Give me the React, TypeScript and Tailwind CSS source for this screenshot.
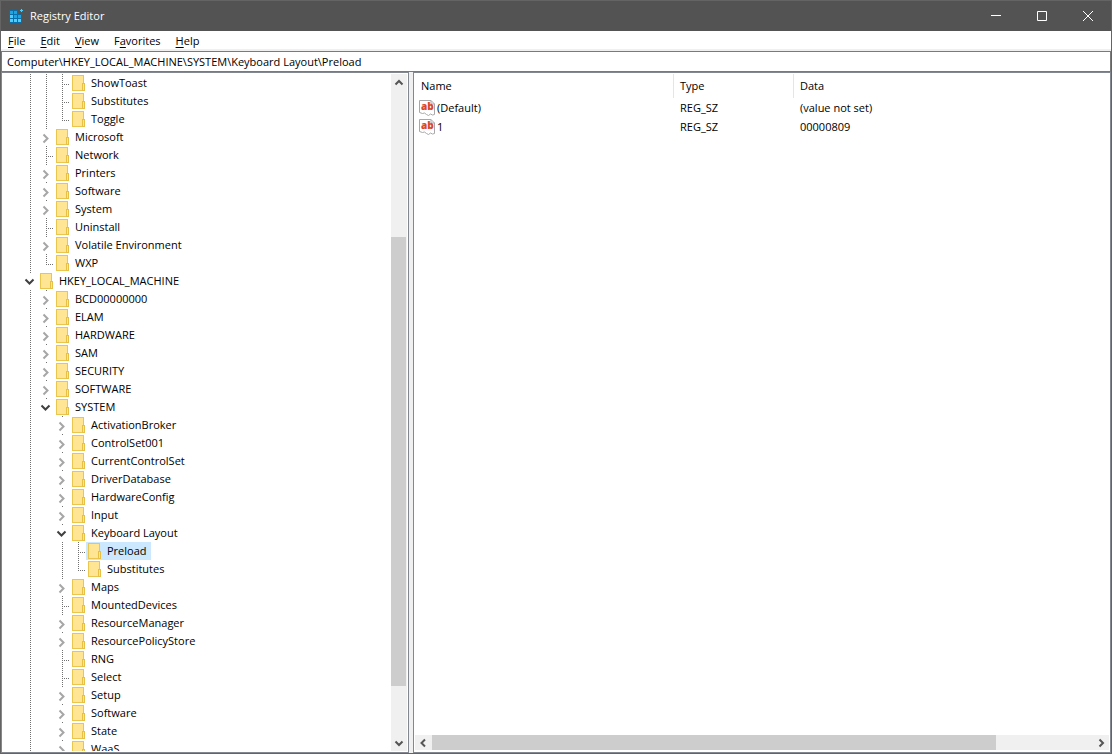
import { useState } from "react";

type Guide = "line" | "none";

interface TreeItem {
  id: number;
  label: string;
  guides: Guide[];
  state: "collapsed" | "expanded" | "leaf";
  last?: boolean;
}

const HKCU_DEEP: Guide[] = ["line", "line"];
const HIVE: Guide[] = ["line"];
const SYSTEM: Guide[] = ["line", "none"];
const LAYOUT: Guide[] = ["line", "none", "line"];

const treeItems: TreeItem[] = [
  { id: 1, label: "ShowToast", guides: HKCU_DEEP, state: "leaf" },
  { id: 2, label: "Substitutes", guides: HKCU_DEEP, state: "leaf" },
  { id: 3, label: "Toggle", guides: HKCU_DEEP, state: "leaf", last: true },
  { id: 4, label: "Microsoft", guides: HIVE, state: "collapsed" },
  { id: 5, label: "Network", guides: HIVE, state: "leaf" },
  { id: 6, label: "Printers", guides: HIVE, state: "collapsed" },
  { id: 7, label: "Software", guides: HIVE, state: "collapsed" },
  { id: 8, label: "System", guides: HIVE, state: "collapsed" },
  { id: 9, label: "Uninstall", guides: HIVE, state: "leaf" },
  { id: 10, label: "Volatile Environment", guides: HIVE, state: "collapsed" },
  { id: 11, label: "WXP", guides: HIVE, state: "leaf", last: true },
  { id: 12, label: "HKEY_LOCAL_MACHINE", guides: [], state: "expanded" },
  { id: 13, label: "BCD00000000", guides: HIVE, state: "collapsed" },
  { id: 14, label: "ELAM", guides: HIVE, state: "collapsed" },
  { id: 15, label: "HARDWARE", guides: HIVE, state: "collapsed" },
  { id: 16, label: "SAM", guides: HIVE, state: "collapsed" },
  { id: 17, label: "SECURITY", guides: HIVE, state: "collapsed" },
  { id: 18, label: "SOFTWARE", guides: HIVE, state: "collapsed" },
  { id: 19, label: "SYSTEM", guides: HIVE, state: "expanded" },
  { id: 20, label: "ActivationBroker", guides: SYSTEM, state: "collapsed" },
  { id: 21, label: "ControlSet001", guides: SYSTEM, state: "collapsed" },
  { id: 22, label: "CurrentControlSet", guides: SYSTEM, state: "collapsed" },
  { id: 23, label: "DriverDatabase", guides: SYSTEM, state: "collapsed" },
  { id: 24, label: "HardwareConfig", guides: SYSTEM, state: "collapsed" },
  { id: 25, label: "Input", guides: SYSTEM, state: "collapsed" },
  { id: 26, label: "Keyboard Layout", guides: SYSTEM, state: "expanded" },
  { id: 27, label: "Preload", guides: LAYOUT, state: "leaf" },
  { id: 28, label: "Substitutes", guides: LAYOUT, state: "leaf", last: true },
  { id: 29, label: "Maps", guides: SYSTEM, state: "collapsed" },
  { id: 30, label: "MountedDevices", guides: SYSTEM, state: "leaf" },
  { id: 31, label: "ResourceManager", guides: SYSTEM, state: "collapsed" },
  { id: 32, label: "ResourcePolicyStore", guides: SYSTEM, state: "collapsed" },
  { id: 33, label: "RNG", guides: SYSTEM, state: "leaf" },
  { id: 34, label: "Select", guides: SYSTEM, state: "leaf" },
  { id: 35, label: "Setup", guides: SYSTEM, state: "collapsed" },
  { id: 36, label: "Software", guides: SYSTEM, state: "collapsed" },
  { id: 37, label: "State", guides: SYSTEM, state: "collapsed" },
  { id: 38, label: "WaaS", guides: SYSTEM, state: "collapsed" },
];

const menus = ["_File", "_Edit", "_View", "F_avorites", "_Help"];

const values = [
  { name: "(Default)", type: "REG_SZ", data: "(value not set)" },
  { name: "1", type: "REG_SZ", data: "00000809" },
];

function AppIcon() {
  return (
    <svg width="16" height="16" viewBox="0 0 16 16" shapeRendering="crispEdges" aria-hidden="true">
      <path d="M1 2h9v4h4v9H1z" fill="#0a6ca8" />
      <path d="M2 3h3v3H2zM6 3h3v3H6zM6 7h3v3H6zM10 7h3v3h-3z" fill="#1fa4e0" />
      <path d="M2 7h3v3H2zM2 11h3v3H2zM6 11h3v3H6zM10 11h3v3h-3z" fill="#4fcdfb" />
      <path d="M13 0h1v1h1v1h1v1h-1v1h-1v1h-1v-1h-1v-1h-1v-1h1v-1h1z" fill="#0a6ca8" />
      <path d="M13 1h1v1h1v1h-1v1h-1v-1h-1v-1h1z" fill="#4fcdfb" />
    </svg>
  );
}

function FolderIcon() {
  return (
    <svg width="13" height="16" viewBox="0 0 13 16" shapeRendering="crispEdges" aria-hidden="true">
      <path d="M0.5 0.5h11v15h-11z" fill="#ffe594" stroke="#ebc64e" />
      <path d="M10.5 8.5h2v7h-2z" fill="#ffe594" stroke="#e9c046" />
    </svg>
  );
}

function StringIcon() {
  return (
    <svg width="16" height="16" viewBox="0 0 16 16" aria-hidden="true">
      <path
        d="M0.5 0.5h11.5l3.5 3.5v10.5l-2 .5-2-1-2 1.500-2-1-2-1.500-2 .5-3-1z"
        fill="#fff"
        stroke="#a8a8a8"
      />
      <path d="M12 0.500v3.500h3.500" fill="none" stroke="#a8a8a8" />
      <text x="2" y="10" fontSize="10" fontWeight="800" fontFamily="Open Sans, sans-serif" fill="#d9482b">
        ab
      </text>
    </svg>
  );
}

function Guides({ item }: { item: TreeItem }) {
  return (
    <>
      {item.guides.map((guide, i) => (
        <svg key={i} className="shrink-0" width="16" height="18" aria-hidden="true">
          {guide === "line" && <path d="M8.5 0v18" stroke="#707070" strokeDasharray="1 1" />}
        </svg>
      ))}
      <svg className="shrink-0" width="16" height="18" fill="none" aria-hidden="true">
        {item.state === "leaf" && (
          <>
            <path d={item.last ? "M8.5 0v11" : "M8.5 0v18"} stroke="#707070" strokeDasharray="1 1" />
            <path d="M8 10.5h7" stroke="#707070" strokeDasharray="1 1" />
          </>
        )}
        {item.state !== "leaf" && <path d="M8 0.5h1" stroke="#707070" />}
        {item.state === "collapsed" && <path d="M5.500 6.500l4 4-4 4" stroke="#a6a6a6" strokeWidth="2" />}
        {item.state === "expanded" && <path d="M3.500 7.500l4 4 4-4" stroke="#404040" strokeWidth="2" />}
      </svg>
    </>
  );
}

const arrows = {
  up: "M4.500 10.500l3.500-3.500 3.500 3.500",
  down: "M4.500 6.500l3.500 3.500 3.500-3.500",
  left: "M10 4.500l-3.500 3.500 3.500 3.500",
  right: "M6.500 4.500l3.500 3.500-3.500 3.500",
};

function ArrowButton({ direction }: { direction: keyof typeof arrows }) {
  return (
    <button type="button" aria-label={`Scroll ${direction}`} className="flex size-4 shrink-0 items-center justify-center">
      <svg width="16" height="16" viewBox="0 0 16 16" fill="none" stroke="#555" strokeWidth="2">
        <path d={arrows[direction]} />
      </svg>
    </button>
  );
}

export default function App() {
  const [path, setPath] = useState("Computer\\HKEY_LOCAL_MACHINE\\SYSTEM\\Keyboard Layout\\Preload");
  const [selected, setSelected] = useState(27);

  return (
    <div className="flex h-screen flex-col overflow-hidden border border-[#646464] bg-[#f0f0f0] font-['Open_Sans',sans-serif] text-[11px] leading-[18px] text-black">
      <header className="flex h-[30px] shrink-0 items-center bg-[#535353] pl-[7px] text-white">
        <AppIcon />
        <h1 className="ml-1.5 flex-1">Registry Editor</h1>
        <button type="button" aria-label="Minimize" className="flex h-full w-[46px] items-center justify-center">
          <svg width="10" height="10" stroke="#fff" fill="none"><path d="M0 4.500h10" /></svg>
        </button>
        <button type="button" aria-label="Maximize" className="flex h-full w-[46px] items-center justify-center">
          <svg width="10" height="10" stroke="#fff" fill="none"><path d="M0.500 0.500h9v9h-9z" /></svg>
        </button>
        <button type="button" aria-label="Close" className="flex h-full w-[46px] items-center justify-center">
          <svg width="10" height="10" stroke="#fff" fill="none"><path d="M0 0l10 10M10 0L0 10" /></svg>
        </button>
      </header>

      <nav className="flex h-5 shrink-0 items-center gap-[15px] border-b-2 border-[#f0f0f0] bg-white pt-0.5 pl-[7px]">
        {menus.map((menu) => {
          const [before, after] = menu.split("_");
          return (
            <button key={menu} type="button">
              {before}
              <span className="underline underline-offset-2">{after[0]}</span>
              {after.slice(1)}
            </button>
          );
        })}
      </nav>

      <input
        aria-label="Registry path"
        className="h-[21px] w-full shrink-0 border border-[#7a7a7a] bg-white px-[5px] outline-none"
        value={path}
        onChange={(e) => setPath(e.target.value)}
      />

      <main className="flex min-h-0 flex-1 gap-1">
        <section className="flex w-[408px] shrink-0 border border-[#828790] bg-white py-px pr-px">
          <ul role="tree" aria-label="Registry keys" className="min-w-0 flex-1 overflow-hidden pl-5">
            {treeItems.map((item) => (
              <li
                key={item.id}
                role="treeitem"
                aria-selected={item.id === selected}
                className="flex h-[18px] cursor-default"
                onClick={() => setSelected(item.id)}
              >
                <Guides item={item} />
                <span className={`flex items-center pl-0.5 pr-1 ${item.id === selected ? "bg-[#cce8ff]" : ""}`}>
                  <FolderIcon />
                  <span className="pl-1.5 whitespace-nowrap">{item.label}</span>
                </span>
              </li>
            ))}
          </ul>
          <div className="flex w-4 shrink-0 flex-col bg-[#f0f0f0]">
            <ArrowButton direction="up" />
            <div className="grow-[147] basis-0" />
            <div className="mr-px grow-[449] basis-0 bg-[#cdcdcd]" />
            <div className="grow-[49] basis-0" />
            <ArrowButton direction="down" />
          </div>
        </section>

        <section className="flex min-w-0 flex-1 flex-col border border-[#828790] bg-white px-px pt-px pb-0.5">
          <div className="min-h-0 flex-1">
            <table className="w-full table-fixed border-separate border-spacing-0 text-left">
              <thead>
                <tr className="h-6">
                  <th className="w-[259px] border-r border-[#e5e5e5] p-0 pl-1.5 font-normal">Name</th>
                  <th className="w-[120px] border-r border-[#e5e5e5] p-0 pl-1.5 font-normal">Type</th>
                  <th className="p-0 pl-1.5 font-normal">Data</th>
                </tr>
              </thead>
              <tbody>
                {values.map((value) => (
                  <tr key={value.name} className="h-[19px]">
                    <td className="p-0 pl-1">
                      <span className="flex items-center gap-0.5">
                        <StringIcon />
                        {value.name}
                      </span>
                    </td>
                    <td className="p-0 pl-1.5">{value.type}</td>
                    <td className="p-0 pl-1.5">{value.data}</td>
                  </tr>
                ))}
              </tbody>
            </table>
          </div>
          <div className="flex h-[15px] shrink-0 items-center gap-px bg-[#f0f0f0]">
            <ArrowButton direction="left" />
            <div className="h-full grow-[565] basis-0 bg-[#cdcdcd]" />
            <div className="grow-[95] basis-0" />
            <ArrowButton direction="right" />
          </div>
        </section>
      </main>
    </div>
  );
}
